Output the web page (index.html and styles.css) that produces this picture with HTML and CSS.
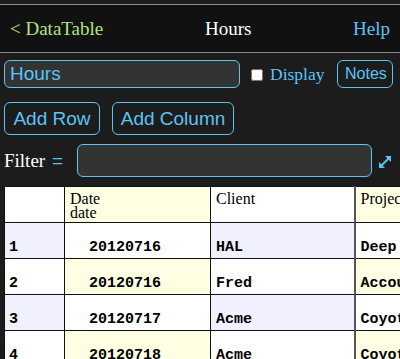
FILE: index.html
```html
<!DOCTYPE html>
<html lang="en">
<head>
<meta charset="UTF-8" />
<meta name="viewport" content="width=device-width, initial-scale=1" />
<title>Hours - DataTable</title>
<link rel="stylesheet" href="styles.css">
</head>
<body>
  <div id="topbar">
    <a class="back" href="#">&lt; DataTable</a>
    <span class="title">Hours</span>
    <a class="help" href="#">Help</a>
  </div>

  <div class="toolbar">
    <input class="name" type="text" value="Hours" aria-label="Table name" />
    <label class="display"><input type="checkbox" /> Display</label>
    <button class="btn notes">Notes</button>
  </div>

  <div class="actions">
    <button class="btn big">Add Row</button>
    <button class="btn big">Add Column</button>
  </div>

  <div class="filter">
    <span class="filter-label">Filter <span class="eq">=</span></span>
    <input class="filter-input" type="text" aria-label="Filter" />
    <svg class="expand" width="14" height="14" viewBox="0 0 14 14" aria-hidden="true">
      <path d="M3.5 10.5 L10.5 3.5" stroke="#5bc4f5" stroke-width="2" />
      <path d="M7 1 H13 V7 Z M1 7 V13 H7 Z" fill="#5bc4f5" />
    </svg>
  </div>

  <div class="grid-wrap">
    <table class="grid">
      <colgroup>
        <col class="c-num" /><col class="c-date" /><col class="c-client" /><col class="c-proj" />
      </colgroup>
      <thead>
        <tr>
          <th></th>
          <th>Date<br />date</th>
          <th>Client</th>
          <th class="proj">Project</th>
        </tr>
      </thead>
      <tbody>
        <tr><td>1</td><td class="date">20120716</td><td>HAL</td><td class="proj">Deep Space</td></tr>
        <tr><td>2</td><td class="date">20120716</td><td>Fred</td><td class="proj">Accounts</td></tr>
        <tr><td>3</td><td class="date">20120717</td><td>Acme</td><td class="proj">Coyote</td></tr>
        <tr><td>4</td><td class="date">20120718</td><td>Acme</td><td class="proj">Coyote</td></tr>
      </tbody>
    </table>
  </div>
</body>
</html>
```

FILE: styles.css
```css
:root {
  --color-bg: #1c1c1c;
  --color-bar: #111111;
  --color-blue: #5bc4f5;
  --color-green: #b2e480;
  --color-field: #333333;
  --color-lavender: #f0f0ff;
  --color-cream: #ffffe4;
  --font-serif: 'Liberation Serif', 'Times New Roman', serif;
  --font-sans: 'Liberation Sans', Arial, sans-serif;
  --font-mono: 'Liberation Mono', 'Courier New', monospace;
}

* {
  box-sizing: border-box;
}

html, body {
  overflow: hidden;
}

body {
  margin: 0;
  background: var(--color-bg);
  font-family: var(--font-serif);
  color: #fff;
}

a {
  text-decoration: none;
}

#topbar {
  margin-top: 4px;
  height: 49px;
  display: flex;
  justify-content: space-between;
  align-items: center;
  padding: 0 10px;
  background: var(--color-bar);
  border-top: 1px solid #8a8a8a;
  border-bottom: 1px solid #8a8a8a;
  font-size: 19px;
}

#topbar .back {
  color: var(--color-green);
}

#topbar .title {
  color: #fff;
}

#topbar .help {
  color: var(--color-blue);
}

.btn,
.name,
.filter-input {
  background: var(--color-field);
  border: 1px solid var(--color-blue);
  border-radius: 6px;
  color: var(--color-blue);
  font-family: var(--font-sans);
}

.btn {
  background: transparent;
  cursor: pointer;
  padding: 0 7px;
}

.toolbar {
  display: flex;
  align-items: center;
  margin-top: 7px;
  padding: 0 7px 0 4px;
}

.name {
  width: 236px;
  height: 28px;
  padding: 0 5px;
  font-size: 19px;
}

.display {
  display: flex;
  align-items: center;
  margin-left: 11px;
  color: var(--color-blue);
  font-size: 17.5px;
}

.display input {
  width: 12px;
  height: 12px;
  margin: 1px 7px 0 0;
}

.notes {
  margin-left: auto;
  width: 56px;
  height: 28px;
  font-size: 16px;
}

.actions {
  display: flex;
  gap: 12px;
  margin-top: 14px;
  padding: 0 4px;
}

.big {
  height: 33px;
  font-size: 19px;
}

.actions .big:first-child {
  width: 96px;
}

.actions .big:last-child {
  width: 122px;
}

.filter {
  display: flex;
  align-items: center;
  margin-top: 9px;
  padding: 0 4px;
}

.filter-label {
  width: 73px;
  font-size: 19px;
  color: #fff;
}

.filter-label .eq {
  margin-left: 2px;
  color: var(--color-blue);
  font-family: var(--font-sans);
}

.filter-input {
  width: 295px;
  height: 33px;
}

.expand {
  margin-left: 6px;
  margin-top: 2px;
}

.grid-wrap {
  margin: 9px 0 0 4px;
  overflow: hidden;
}

.grid {
  table-layout: fixed;
  width: 470px;
  border-collapse: collapse;
  background: #fff;
  color: #000;
}

.c-num { width: 60px; }
.c-date { width: 146px; }
.c-client { width: 144px; }
.c-proj { width: 120px; }

.grid th,
.grid td {
  border: 1px solid #111;
  height: 36px;
  white-space: nowrap;
  overflow: hidden;
}

.grid th {
  vertical-align: top;
  text-align: left;
  font-weight: normal;
  font-size: 16px;
  line-height: 14px;
  padding: 5px 5px 0;
}

.grid td {
  vertical-align: bottom;
  font-family: var(--font-mono);
  font-weight: bold;
  font-size: 15px;
  line-height: 17px;
  padding: 0 5px 2px;
}

.grid td:first-child {
  padding-left: 4px;
}

.grid td.date {
  padding-left: 24px;
}

.grid .proj {
  border-left: 2px solid #555;
}

.grid tbody tr:nth-child(odd) td:nth-child(odd) {
  background: var(--color-lavender);
}

.grid thead th:nth-child(even),
.grid tbody tr:nth-child(even) td:nth-child(even) {
  background: var(--color-cream);
}
```
